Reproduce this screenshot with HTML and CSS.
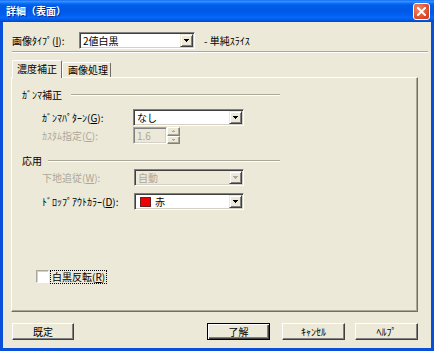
FILE: index.html
```html
<!DOCTYPE html>
<html>
<head>
    <meta charset="utf-8">
    <title>詳細（表面）</title>
    <link rel="stylesheet" href="styles.css">
</head>
<body>
<div class="window">
    <div class="titlebar">
        <span class="title">詳細（表面）</span>
        <span class="close">
            <svg width="9" height="9" viewBox="0 0 9 9"><path d="M1 1L8 8M8 1L1 8" stroke="#fff" stroke-width="2" stroke-linecap="square"/></svg>
        </span>
    </div>
    <div class="client">
        <div class="toprow">
            <span class="toplabel">画像ﾀｲﾌﾟ(<u>I</u>):</span>
            <div class="select wide">
                <span class="value">2値白黒</span>
                <span class="arrow"><svg width="5" height="3"><path d="M0 0h5v1h-1v1h-1v1h-1v-1h-1v-1h-1z"/></svg></span>
            </div>
            <span class="note">- 単純ｽﾗｲｽ</span>
        </div>
        <div class="sep"></div>
        <div class="tabs">
            <div class="tab active">濃度補正</div>
            <div class="tab">画像処理</div>
        </div>
        <div class="panel">
            <div class="group"><span>ｶﾞﾝﾏ補正</span><i class="etch"></i></div>
            <div class="field r1">
                <span>ｶﾞﾝﾏﾊﾟﾀｰﾝ(<u>G</u>):</span>
                <div class="select mid">
                    <span class="value">なし</span>
                    <span class="arrow"><svg width="5" height="3"><path d="M0 0h5v1h-1v1h-1v1h-1v-1h-1v-1h-1z"/></svg></span>
                </div>
            </div>
            <div class="field r2 off">
                <span>ｶｽﾀﾑ指定(<u>C</u>):</span>
                <div class="spin">
                    <div class="edit">1.6</div>
                    <div class="spinbtns">
                        <span class="sbtn"><svg width="3" height="2"><path d="M1 0h1v1h1v1h-3v-1h1z"/></svg></span>
                        <span class="sbtn"><svg width="3" height="2"><path d="M0 0h3v1h-1v1h-1v-1h-1z"/></svg></span>
                    </div>
                </div>
            </div>
            <div class="group g2"><span>応用</span><i class="etch"></i></div>
            <div class="field r3 off">
                <span>下地追従(<u>W</u>):</span>
                <div class="select mid dis">
                    <span class="value">自動</span>
                    <span class="arrow"><svg width="5" height="3"><path d="M0 0h5v1h-1v1h-1v1h-1v-1h-1v-1h-1z"/></svg></span>
                </div>
            </div>
            <div class="field r4">
                <span>ﾄﾞﾛｯﾌﾟｱｳﾄｶﾗｰ(<u>D</u>):</span>
                <div class="select mid">
                    <span class="value"><i class="swatch"></i>赤</span>
                    <span class="arrow"><svg width="5" height="3"><path d="M0 0h5v1h-1v1h-1v1h-1v-1h-1v-1h-1z"/></svg></span>
                </div>
            </div>
            <div class="checkrow">
                <span class="checkbox"></span>
                <span class="checklabel">白黒反転(<u>R</u>)</span>
            </div>
        </div>
        <div class="buttons">
            <div class="btn first">既定</div>
            <div class="spacer"></div>
            <div class="btn default">了解</div>
            <div class="btn cancel">ｷｬﾝｾﾙ</div>
            <div class="btn help">ﾍﾙﾌﾟ</div>
        </div>
    </div>
</div>
</body>
</html>
```

FILE: styles.css
```css
body {
    margin: 0;
    font-family: "Noto Sans CJK JP", "Noto Sans", sans-serif;
    font-size: 10px;
    line-height: 1;
}
.window {
    width: 434px;
    height: 351px;
    background: #0a4fd8;
    display: flex;
    flex-direction: column;
}
.titlebar {
    height: 22px;
    flex: none;
    display: flex;
    align-items: center;
    padding: 0 4px 0 6px;
    background: linear-gradient(to bottom, #0a60f0 0%, #3d95ff 5%, #2386ff 10%, #0a6cf8 16%, #005ce8 24%, #0058e6 50%, #005ef0 66%, #0668fa 80%, #005ae8 90%, #0048c4 100%);
    color: #fff;
}
.title {
    flex: 1;
    font-weight: bold;
    font-size: 10px;
    text-shadow: 1px 1px 0 #0a2a8c;
}
.close {
    width: 17px;
    height: 17px;
    box-sizing: border-box;
    border: 1px solid #fff;
    border-radius: 3px;
    background: radial-gradient(circle at 30% 30%, #f0876a, #e0502c 60%, #c23b1a);
    display: flex;
    align-items: center;
    justify-content: center;
}
.client {
    flex: 1;
    margin: 0 3px 3px;
    background: #ece9d8;
    display: flex;
    flex-direction: column;
    padding-left: 9px;
    color: #000;
}
.toprow {
    margin-top: 10px;
    height: 17px;
    display: flex;
    align-items: center;
}
.toplabel {
    width: 67px;
}
.select {
    box-sizing: border-box;
    height: 17px;
    display: flex;
    align-items: center;
    background: #fff;
    border: 1px solid;
    border-color: #808080 #fff #fff #808080;
    box-shadow: inset 1px 1px 0 #404040, inset -1px -1px 0 #d4d0c8;
    padding: 1px;
}
.select.dis {
    background: #ece9d8;
}
.wide {
    width: 116px;
    margin-right: 9px;
}
.mid {
    width: 111px;
}
.value {
    flex: 1;
    padding-left: 2px;
    display: flex;
    align-items: center;
}
.arrow {
    box-sizing: border-box;
    width: 13px;
    height: 13px;
    background: #ece9d8;
    border: 1px solid;
    border-color: #ece9d8 #404040 #404040 #ece9d8;
    box-shadow: inset 1px 1px 0 #fff, inset -1px -1px 0 #808080;
    display: flex;
    align-items: center;
    justify-content: center;
}
.dis .arrow svg {
    fill: #aca899;
}
.sep {
    margin-top: 2px;
    width: 416px;
    border-top: 1px solid #aca899;
    border-bottom: 1px solid #fff;
}
.tabs {
    margin-top: 7px;
    height: 17px;
    display: flex;
    align-items: flex-end;
    position: relative;
    z-index: 1;
}
.tab {
    box-sizing: border-box;
    width: 49px;
    height: 15px;
    padding-left: 5px;
    border: 1px solid;
    border-color: #fff #716f64 transparent #fff;
    border-bottom: 0;
    border-radius: 2px 2px 0 0;
    display: flex;
    align-items: center;
    background: #ece9d8;
}
.tab.active {
    width: 50px;
    height: 18px;
    margin-bottom: -1px;
    padding-left: 4px;
    padding-bottom: 2px;
}
.panel {
    box-sizing: border-box;
    margin-left: -1px;
    width: 407px;
    height: 235px;
    border: 1px solid;
    border-color: #fff #716f64 #716f64 #fff;
    box-shadow: inset -1px -1px 0 #aca899;
    padding-left: 10px;
    display: flex;
    flex-direction: column;
}
.group {
    margin-top: 10px;
    height: 14px;
    width: 258px;
    display: flex;
    align-items: center;
    gap: 9px;
}
.group.g2 {
    gap: 6px;
}
.etch {
    flex: 1;
    border-top: 1px solid #aca899;
    border-bottom: 1px solid #fff;
}
.field {
    margin-left: 20px;
    display: grid;
    grid-template-columns: 91px auto;
    justify-content: start;
    align-items: center;
}
.r1 { margin-top: 7px; }
.r2 { margin-top: 1px; }
.r3 { margin-top: 1px; }
.r4 { margin-top: 7px; }
.r3 .select, .r4 .select {
    margin-left: 1px;
    width: 110px;
}
.off {
    color: #aca899;
}
.spin {
    display: flex;
    height: 17px;
}
.edit {
    box-sizing: border-box;
    width: 34px;
    height: 17px;
    padding: 3px 3px;
    border: 1px solid;
    border-color: #aca899 #fff #fff #aca899;
    box-shadow: inset 1px 1px 0 #808080, inset -1px -1px 0 #d4d0c8;
    background: #ece9d8;
    display: flex;
    align-items: center;
}
.spinbtns {
    display: flex;
    flex-direction: column;
    width: 13px;
}
.sbtn {
    box-sizing: border-box;
    flex: 1;
    background: #ece9d8;
    border: 1px solid;
    border-color: #fff #808080 #808080 #fff;
    box-shadow: inset -1px -1px 0 #aca899;
    display: flex;
    align-items: center;
    justify-content: center;
}
.sbtn svg {
    fill: #aca899;
}
.swatch {
    width: 11px;
    height: 10px;
    margin: 0 4px 0 2px;
    background: #f00000;
    border: 1px solid #6a2020;
    box-sizing: border-box;
}
.checkrow {
    margin-top: 60px;
    margin-left: 14px;
    height: 13px;
    display: flex;
    align-items: center;
    gap: 2px;
}
.checkbox {
    box-sizing: border-box;
    width: 13px;
    height: 13px;
    background: #fff;
    border: 1px solid;
    border-color: #aca899 #fff #fff #aca899;
    box-shadow: inset 1px 1px 0 #d4d0c8;
}
.checklabel {
    outline: 1px dotted #000;
    padding: 1px 1px;
}
.buttons {
    margin-top: 11px;
    height: 17px;
    display: flex;
    padding-right: 13px;
}
.btn {
    box-sizing: border-box;
    width: 63px;
    height: 17px;
    background: #ece9d8;
    border: 1px solid;
    border-color: #fff #404040 #404040 #fff;
    box-shadow: inset -1px -1px 0 #808080;
    display: flex;
    align-items: center;
    justify-content: center;
}
.btn.first {
    width: 62px;
}
.spacer {
    flex: 1;
}
.btn.default {
    border: 1px solid #000;
    box-shadow: inset 1px 1px 0 #fff, inset -1px -1px 0 #404040, inset -2px -2px 0 #808080;
}
.btn.cancel {
    margin-left: 12px;
}
.btn.help {
    margin-left: 10px;
}
```
